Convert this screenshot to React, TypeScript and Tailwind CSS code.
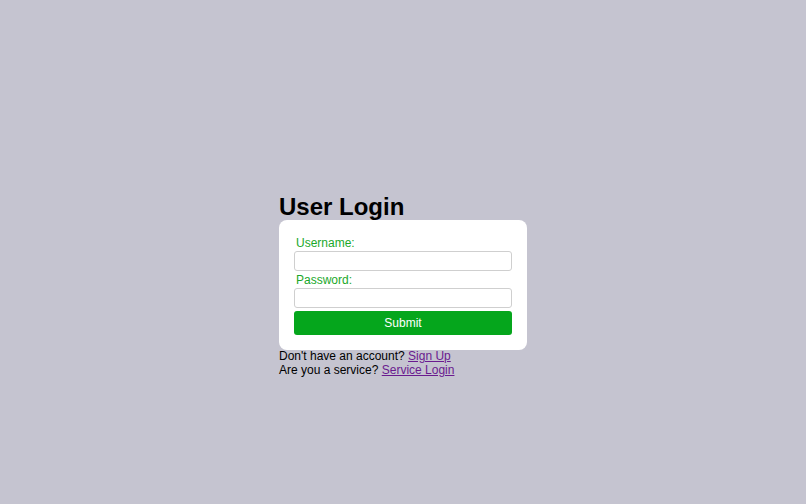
import React from 'react'

export default function App() {
  return (
    <div className="min-h-screen w-full bg-[#c5c4d0] pt-[193px] font-['Liberation_Sans',Arial,sans-serif] text-black">
      <div className="mx-auto w-[248px]">
        {/* Heading */}
        <h1 className="m-0 text-[24px] font-bold leading-[27px]">User Login</h1>

        {/* Login card */}
        <form
          className="flex flex-col rounded-[8px] bg-white p-[15px]"
          onSubmit={(e) => e.preventDefault()}
        >
          <label htmlFor="username" className="mt-[1px] mb-[1px] block pl-[2px] text-[12px] leading-[14px] text-[#1aa82a]">
            Username:
          </label>
          <input
            id="username"
            type="text"
            className="h-[20px] w-full rounded-[3px] border border-[#cfcfcf] bg-white px-1 text-[12px] outline-none"
          />
          <label htmlFor="password" className="mt-[2px] mb-[1px] block pl-[2px] text-[12px] leading-[14px] text-[#1aa82a]">
            Password:
          </label>
          <input
            id="password"
            type="password"
            className="h-[20px] w-full rounded-[3px] border border-[#cfcfcf] bg-white px-1 text-[12px] outline-none"
          />
          <button
            type="submit"
            className="mt-[3px] h-[24px] w-full rounded-[3px] bg-[#05a61c] text-[12px] text-white"
          >
            Submit
          </button>
        </form>

        {/* Footer links */}
        <div className="text-[12px] leading-[13.5px]">
          <p>
            Don't have an account?{' '}
            <a href="#" className="text-[#6a1b8f] underline">Sign Up</a>
          </p>
          <p>
            Are you a service?{' '}
            <a href="#" className="text-[#6a1b8f] underline">Service Login</a>
          </p>
        </div>
      </div>
    </div>
  )
}
